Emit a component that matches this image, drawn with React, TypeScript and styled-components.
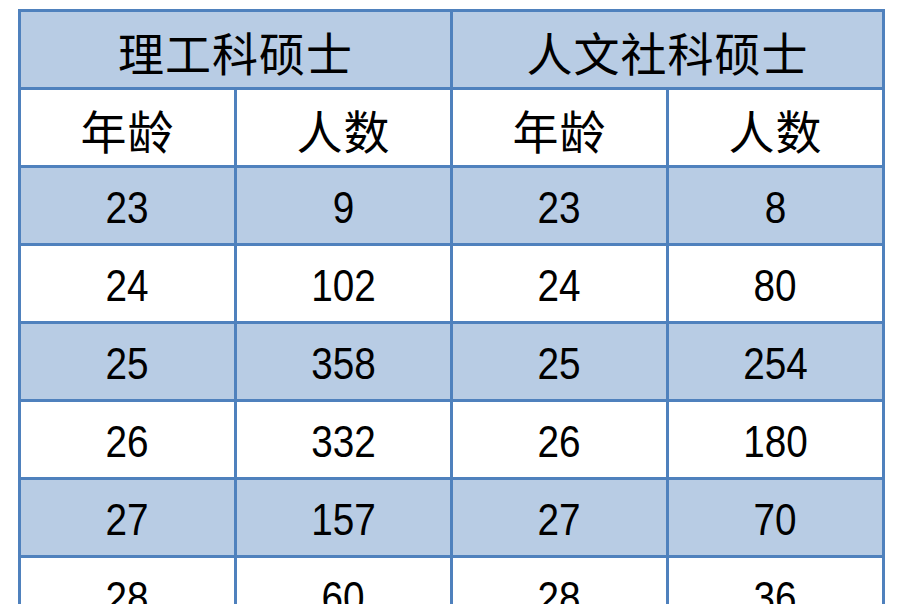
import styled, { createGlobalStyle } from 'styled-components';

const GlobalStyle = createGlobalStyle`
    html, body {
        margin: 0;
        padding: 0;
        background: #ffffff;
        overflow: hidden;
    }
`

const groups = ['理工科硕士', '人文社科硕士'];
const subHeads = ['年龄', '人数', '年龄', '人数'];
const rows = [
    ['23', '9', '23', '8'],
    ['24', '102', '24', '80'],
    ['25', '358', '25', '254'],
    ['26', '332', '26', '180'],
    ['27', '157', '27', '70'],
    ['28', '60', '28', '36'],
];

export default function App() {
    return (
        <>
            <GlobalStyle />
            <Page>
                <Table>
                    {groups.map((g) => (
                        <Cell key={g} $span={2} $shaded>
                            <CjkText>{g}</CjkText>
                        </Cell>
                    ))}
                    {subHeads.map((h, i) => (
                        <Cell key={'h' + i}>
                            <CjkText>{h}</CjkText>
                        </Cell>
                    ))}
                    {rows.map((r, ri) =>
                        r.map((v, ci) => (
                            <Cell key={ri + '-' + ci} $shaded={ri % 2 === 0}>
                                <NumText>{v}</NumText>
                            </Cell>
                        ))
                    )}
                </Table>
            </Page>
        </>
    );
}

const Page = styled.div`
    padding: 9px 0 0 18px;
`

const Table = styled.div`
    display: grid;
    grid-template-columns: repeat(4, 213px);
    grid-auto-rows: 75px;
    gap: 3px;
    padding: 3px;
    width: max-content;

    background-color: #4f81bd;
`

const Cell = styled.div<{ $span?: number; $shaded?: boolean }>`
    grid-column: span ${(p) => p.$span ?? 1};

    display: flex;
    align-items: center;
    justify-content: center;

    background-color: ${(p) => (p.$shaded ? '#b8cce4' : '#ffffff')};
    color: #000000;
`

const CjkText = styled.span`
    font-family: "Noto Sans CJK SC", sans-serif;
    font-size: 46px;
    letter-spacing: 1px;
    line-height: 1;
    margin-top: 2px;
`

const NumText = styled.span`
    display: inline-block;
    font-family: "Liberation Sans", sans-serif;
    font-size: 45px;
    line-height: 1;
    margin-top: 4px;
    transform: scaleX(0.86);
`
